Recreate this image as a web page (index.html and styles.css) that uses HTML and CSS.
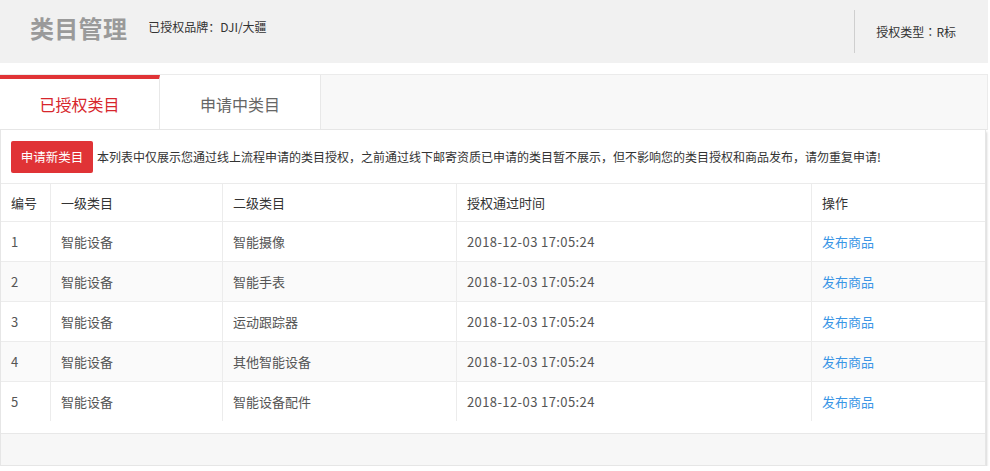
FILE: index.html
```html
<!DOCTYPE html>
<html lang="zh-CN">
<head>
<meta charset="utf-8">
<title>类目管理</title>
<link rel="stylesheet" href="styles.css">
</head>
<body>
<div class="page">
  <header class="top">
    <h1 class="title">类目管理</h1>
    <div class="brand">已授权品牌<span class="colon">：</span>DJI/大疆</div>
    <div class="auth-type">授权类型<span class="colon">：</span>R标</div>
  </header>

  <div class="panel">
    <div class="tabs">
      <div class="tab active">已授权类目</div>
      <div class="tab">申请中类目</div>
    </div>
    <div class="box">
      <div class="notice">
        <button class="btn-apply">申请新类目</button>
        <span class="notice-text">本列表中仅展示您通过线上流程申请的类目授权，之前通过线下邮寄资质已申请的类目暂不展示，但不影响您的类目授权和商品发布，请勿重复申请!</span>
      </div>
      <table class="grid">
        <thead>
          <tr>
            <th class="c1">编号</th>
            <th class="c2">一级类目</th>
            <th class="c3">二级类目</th>
            <th class="c4">授权通过时间</th>
            <th class="c5">操作</th>
          </tr>
        </thead>
        <tbody>
          <tr><td>1</td><td>智能设备</td><td>智能摄像</td><td class="time">2018-12-03 17:05:24</td><td><a class="link" href="#">发布商品</a></td></tr>
          <tr class="alt"><td>2</td><td>智能设备</td><td>智能手表</td><td class="time">2018-12-03 17:05:24</td><td><a class="link" href="#">发布商品</a></td></tr>
          <tr><td>3</td><td>智能设备</td><td>运动跟踪器</td><td class="time">2018-12-03 17:05:24</td><td><a class="link" href="#">发布商品</a></td></tr>
          <tr class="alt"><td>4</td><td>智能设备</td><td>其他智能设备</td><td class="time">2018-12-03 17:05:24</td><td><a class="link" href="#">发布商品</a></td></tr>
          <tr class="last"><td>5</td><td>智能设备</td><td>智能设备配件</td><td class="time">2018-12-03 17:05:24</td><td><a class="link" href="#">发布商品</a></td></tr>
        </tbody>
      </table>
      <div class="footer"></div>
    </div>
  </div>
</div>
</body>
</html>
```

FILE: styles.css
```css
* { box-sizing: border-box; }

html, body {
  margin: 0;
  padding: 0;
  background: #ffffff;
}

body {
  font-family: "Noto Sans CJK SC", "Noto Sans", sans-serif;
  color: #333;
  font-size: 12px;
}

.page {
  width: 988px;
}

.colon {
  font-family: "Noto Sans CJK TC", "Noto Sans CJK SC", sans-serif;
}

/* header */
.top {
  height: 63px;
  background: #f1f1f1;
  display: flex;
  align-items: flex-start;
  padding-left: 30px;
}

.title {
  margin: 15px 0 0 0;
  font-size: 24px;
  line-height: 26px;
  font-weight: bold;
  color: #9a9a9a;
  letter-spacing: 0.3px;
}

.brand {
  margin: 19px 0 0 21px;
  font-size: 12px;
  line-height: 16px;
  color: #333;
}

.auth-type {
  margin: 10px 0 0 auto;
  height: 43px;
  border-left: 1px solid #cfcfcf;
  padding: 0 32px 0 21px;
  display: flex;
  align-items: center;
  font-size: 12px;
  color: #333;
}

/* panel */
.panel {
  margin-top: 11px;
  width: 988px;
}

.tabs {
  display: flex;
  height: 56px;
  background: #f8f8f8;
  border-top: 1px solid #ebebeb;
  border-right: 1px solid #ebebeb;
  border-bottom: 1px solid #e6e6e6;
}

.tab {
  width: 161px;
  height: 54px;
  padding-top: 4px;
  background: #ffffff;
  border-right: 1px solid #e8e8e8;
  display: flex;
  align-items: center;
  justify-content: center;
  font-size: 16px;
  color: #666;
}

.tab.active {
  width: 160px;
  border-top: 4px solid #e03336;
  padding-top: 0;
  color: #d7262c;
}

.box {
  width: 986px;
  background: #ffffff;
  border: 1px solid #e6e6e6;
  border-top: none;
  box-shadow: 1px 2px 2px rgba(0, 0, 0, 0.16);
}

.notice {
  height: 54px;
  display: flex;
  align-items: center;
  padding-left: 10px;
  border-bottom: 1px solid #ebebeb;
}

.btn-apply {
  height: 32px;
  width: 82px;
  padding: 0;
  border: none;
  border-radius: 2px;
  background: #e03336;
  color: #ffffff;
  font-family: inherit;
  font-size: 12.5px;
  cursor: pointer;
}

.notice-text {
  margin-left: 4px;
  font-size: 12px;
  color: #333;
}

/* table */
.grid {
  width: 984px;
  table-layout: fixed;
  border-collapse: separate;
  border-spacing: 0;
  font-size: 13px;
}

.grid th,
.grid td {
  text-align: left;
  padding: 0 0 0 10px;
  border-right: 1px solid #ececec;
  border-bottom: 1px solid #ececec;
  white-space: nowrap;
}

.grid th:last-child,
.grid td:last-child {
  border-right: none;
}

.grid th {
  height: 38px;
  font-weight: normal;
  color: #333;
}

.grid td {
  height: 40px;
  color: #555;
}

.grid td.time {
  letter-spacing: 0.4px;
}

.grid tr.last td {
  border-bottom: none;
  height: 39px;
}

.grid tr.alt td {
  background: #fafafa;
}

.c1 { width: 50px; }
.c2 { width: 172px; }
.c3 { width: 234px; }
.c4 { width: 355px; }
.c5 { width: 173px; }

.link {
  color: #3a96e6;
  text-decoration: none;
}

.footer {
  margin-top: 12px;
  height: 32px;
  background: #f7f7f7;
  border-top: 1px solid #e8e8e8;
}
```
